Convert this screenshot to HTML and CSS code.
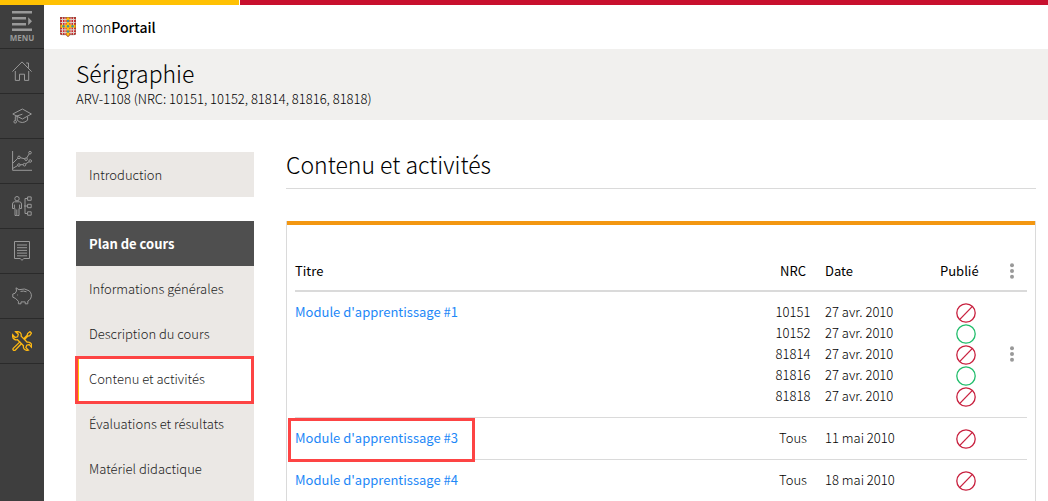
FILE: index.html
```html
<!DOCTYPE html>
<html lang="fr">
<head>
  <meta charset="UTF-8">
  <title>monPortail - Sérigraphie</title>
  <meta name="viewport" content="width=device-width, initial-scale=1">
  <link rel="stylesheet" href="styles.css">
</head>
<body>

  <!-- Symboles partagés -->
  <svg class="symbols" aria-hidden="true">
    <symbol id="off" viewBox="0 0 20 20">
      <circle cx="10" cy="10" r="9.2"/>
      <path d="M3.6 16.6L16.4 3.4"/>
    </symbol>
    <symbol id="on" viewBox="0 0 20 20">
      <circle cx="10" cy="10" r="9.2"/>
    </symbol>
    <symbol id="dots" viewBox="0 0 4 16">
      <circle cx="2" cy="2.2" r="2"/>
      <circle cx="2" cy="8" r="2"/>
      <circle cx="2" cy="13.8" r="2"/>
    </symbol>
  </svg>

  <div class="topbar"></div>

  <div class="layout">

    <!-- BARRE LATÉRALE -->
    <nav class="sidebar">
      <button class="sidebar__item sidebar__menu" type="button">
        <svg class="icon-menu" viewBox="0 0 20 20" aria-hidden="true">
          <path d="M0 0h20v2.6H0zM0 6h14v2.6H0zM0 12h14v2.6H0zM0 17.4h20V20H0zM16.2 6.3l3.8 4-3.8 4z"/>
        </svg>
        MENU
      </button>
      <a class="sidebar__item" href="#" aria-label="Accueil">
        <svg class="icon" viewBox="0 0 20 20">
          <path d="M.4 10.6L10 .9l9.600 9.700M14.200 2h2.300v4.800M3.300 10v9.400h4.200v-6.200h5v6.200h4.200V10"/>
        </svg>
      </a>
      <a class="sidebar__item" href="#" aria-label="Études">
        <svg class="icon" viewBox="0 0 20 20">
          <path d="M.8 8L10.400 3l9 5-9 5zM10.400 8.200L3.300 10.500v4M5.200 10.600v3.600q5 4.600 10.400 0v-3.600"/>
          <circle cx="3.200" cy="15.800" r="1.300"/>
        </svg>
      </a>
      <a class="sidebar__item" href="#" aria-label="Résultats">
        <svg class="icon" viewBox="0 0 20 20">
          <path d="M.6 0v19.300H20M.8 12.200l5-4.900M8.200 6.700l5 1.200M14.700 7l2.500-4.200M.8 17.400l4.800-2.800M8.200 13.700h3M13.500 12.900l3.600-2.200"/>
          <circle cx="7" cy="6.400" r="1.300"/>
          <circle cx="14.100" cy="8.200" r="1.300"/>
          <circle cx="18" cy="1.700" r="1.300"/>
          <circle cx="6.900" cy="14" r="1.300"/>
          <circle cx="12.500" cy="13.700" r="1.300"/>
          <circle cx="18.200" cy="10" r="1.300"/>
        </svg>
      </a>
      <a class="sidebar__item" href="#" aria-label="Organisation">
        <svg class="icon" viewBox="0 0 20 20">
          <circle cx="5" cy="2.700" r="2.200"/>
          <path d="M2.500 5.800h5q2 .2 2 2.200v4.500H7.600V8.600M2.500 5.800q-2 .2-2 2.200v4.500h1.900V8.600M3 12.500v7h1.800v-6M7 12.500v7H5.200M12 10h3.500M15.500 2.500H13v15h2.500"/>
          <path d="M15.600.9h3.600v3.400h-3.600zM15.600 8.300h3.600v3.400h-3.600zM15.600 15.800h3.600v3.400h-3.600z"/>
        </svg>
      </a>
      <a class="sidebar__item" href="#" aria-label="Documents">
        <svg class="icon" viewBox="0 0 20 20">
          <path d="M2.500.5h15v17h-5.800L10 19.400l-1.700-1.900H2.500zM5 4h10M5 6.700h10M5 9.400h10M5 12.100h10M5 14.800h10"/>
        </svg>
      </a>
      <a class="sidebar__item" href="#" aria-label="Finances">
        <svg class="icon" viewBox="0 0 20 20">
          <path d="M4 1.800l3 1.900q6-2 10.300 1.200 3.600 3.700 1.100 8.100-1 1.300-2.600 2.100v2.700h-2.600v-1.900H9v1.900H6.400v-2.500L3.700 12.500.8 11.200V8l2.300-.7 1.400-2.300zM8.500 5.400q3.200-.8 6 .4M5.600 8.600v.8"/>
        </svg>
      </a>
      <a class="sidebar__item sidebar__item--active" href="#" aria-label="Outils">
        <svg class="icon" viewBox="0 0 20 20">
          <path d="M3.600.7l2.700 2.500-.7 2.600L3 6.500.7 3.800Q.2 7 2.500 8.400q1.300.8 3 .3l6 6q-.5 2.100.9 3.600 1.600 1.500 4 .9l-2.500-2.600.8-2.400 2.500-.7 2.300 2.600q.8-2.600-1-4.100-1.500-1.200-3.300-.8L9.100 5.100q.6-2-.9-3.500Q6.300.1 3.600.7z"/>
          <path d="M11.700 7.700l3.500-3.500.4-1.700 2.400-1.900 1.500 1.500-1.800 2.500-1.800.4-3.400 3.500M8.200 10.600l-7 6.700q-.7 1.200.3 2 1 .6 1.900-.3l6.400-6.700"/>
        </svg>
      </a>
    </nav>

    <div class="page">

      <header class="brand">
        <svg class="crest" viewBox="0 0 16 20" aria-hidden="true">
          <path fill="#d3262c" d="M0 0h16v16.500q0 1.500-2 1.500h-4l-2 2-2-2H2q-2 0-2-1.500z"/>
          <path stroke="#ddd0c8" stroke-width="1" fill="none" d="M2.500 0v18M5 0v18M11 0v18M13.500 0v18M0 2.500h16M0 5.500h16M0 12.800h16M0 15.500h16"/>
          <path fill="#fdc00b" d="M6.500 0h3v7.800H16v3H9.500V18L8 19.500 6.500 18v-7.200H0v-3h6.500z"/>
          <g fill="#3a8fa3">
            <circle cx="8" cy="4" r="1.200"/>
            <circle cx="3.500" cy="9.300" r="1.200"/>
            <circle cx="8" cy="9.300" r="1.200"/>
            <circle cx="12.500" cy="9.300" r="1.200"/>
            <circle cx="8" cy="14.500" r="1.200"/>
          </g>
          <path fill="none" stroke="#7c5945" stroke-width=".6" d="M.3.300h15.400v16.200q0 1.200-1.800 1.200h-4L8 19.600l-1.900-1.900h-4q-1.800 0-1.800-1.200z"/>
        </svg>
        <span>mon<strong>Portail</strong></span>
      </header>

      <div class="course">
        <h1 class="course__title">Sérigraphie</h1>
        <p class="course__code">ARV-1108 (NRC: 10151, 10152, 81814, 81816, 81818)</p>
      </div>

      <div class="content">

        <!-- MENU DU COURS -->
        <nav class="menu">
          <ul class="menu__group">
            <li><a class="menu__link" href="#">Introduction</a></li>
          </ul>
          <ul class="menu__group">
            <li class="menu__heading">Plan de cours</li>
            <li><a class="menu__link" href="#">Informations générales</a></li>
            <li><a class="menu__link" href="#">Description du cours</a></li>
            <li><a class="menu__link menu__link--active" href="#">Contenu et activités</a></li>
            <li><a class="menu__link" href="#">Évaluations et résultats</a></li>
            <li><a class="menu__link" href="#">Matériel didactique</a></li>
          </ul>
        </nav>

        <!-- LISTE DES MODULES -->
        <main class="main">
          <h2 class="main__title">Contenu et activités</h2>
          <div class="panel">
            <table class="modules">
              <thead>
                <tr>
                  <th class="col-title">Titre</th>
                  <th class="col-nrc">NRC</th>
                  <th class="col-date">Date</th>
                  <th class="col-state">Publié</th>
                  <th class="col-more"><button class="more" type="button" aria-label="Options"><svg><use href="#dots"/></svg></button></th>
                </tr>
              </thead>
              <tbody>
                <tr>
                  <td><a class="modules__link" href="#">Module d'apprentissage #1</a></td>
                  <td class="col-nrc">10151<br>10152<br>81814<br>81816<br>81818</td>
                  <td class="col-date">27 avr. 2010<br>27 avr. 2010<br>27 avr. 2010<br>27 avr. 2010<br>27 avr. 2010</td>
                  <td class="col-state">
                    <svg class="state state--off"><use href="#off"/></svg>
                    <svg class="state state--on"><use href="#on"/></svg>
                    <svg class="state state--off"><use href="#off"/></svg>
                    <svg class="state state--on"><use href="#on"/></svg>
                    <svg class="state state--off"><use href="#off"/></svg>
                  </td>
                  <td class="col-more"><button class="more" type="button" aria-label="Options"><svg><use href="#dots"/></svg></button></td>
                </tr>
                <tr>
                  <td><a class="modules__link modules__link--marked" href="#">Module d'apprentissage #3</a></td>
                  <td class="col-nrc">Tous</td>
                  <td class="col-date">11 mai 2010</td>
                  <td class="col-state"><svg class="state state--off"><use href="#off"/></svg></td>
                  <td></td>
                </tr>
                <tr>
                  <td><a class="modules__link" href="#">Module d'apprentissage #4</a></td>
                  <td class="col-nrc">Tous</td>
                  <td class="col-date">18 mai 2010</td>
                  <td class="col-state"><svg class="state state--off"><use href="#off"/></svg></td>
                  <td></td>
                </tr>
              </tbody>
            </table>
          </div>
        </main>

      </div>
    </div>
  </div>

</body>
</html>
```
FILE: styles.css
```css
* {
  box-sizing: border-box;
}

body {
  margin: 0;
  min-height: 100vh;
  display: flex;
  flex-direction: column;
  font-family: "Source Sans Pro", "Noto Sans CJK SC", sans-serif;
  font-size: 14px;
  font-weight: 300;
  line-height: 21px;
  color: #000;
  background: #fff;
}

h1, h2, p, ul {
  margin: 0;
  padding: 0;
  font-weight: 300;
}

a {
  text-decoration: none;
}

.symbols {
  position: absolute;
  width: 0;
  height: 0;
}

.topbar {
  flex: none;
  height: 5px;
  background: linear-gradient(to right, #ffc103 239px, #fff 239px, #fff 240px, #c8102e 240px);
}

.layout {
  flex: 1;
  display: flex;
}

/* === BARRE LATÉRALE === */
.sidebar {
  flex: none;
  width: 44px;
  background: #3e3e3e;
}

.sidebar__item {
  display: flex;
  flex-direction: column;
  align-items: center;
  justify-content: center;
  width: 100%;
  height: 45px;
  border: 0;
  border-bottom: 1px solid #2a2a2a;
  color: #999;
}

.sidebar__menu {
  height: 44px;
  padding: 0;
  background: none;
  font-family: "Open Sans", sans-serif;
  font-size: 8px;
  font-weight: 700;
  line-height: 10px;
  gap: 2px;
}

.sidebar__item--active {
  color: #fdb813;
}

.icon {
  width: 20px;
  height: 20px;
  fill: none;
  stroke: currentColor;
  stroke-width: 1;
}

.sidebar__item--active .icon {
  stroke-width: 1.3;
}

.icon-menu {
  width: 20px;
  height: 20px;
  fill: currentColor;
}

/* === ENTÊTE === */
.page {
  flex: 1;
  min-width: 0;
  display: flex;
  flex-direction: column;
}

.brand {
  display: flex;
  align-items: center;
  gap: 6px;
  height: 44px;
  padding-left: 16px;
}

.brand strong {
  font-weight: 500;
}

.crest {
  width: 16px;
  height: 20px;
}

.course {
  padding: 9px 32px 11px;
  background: #f1f0ee;
}

.course__title {
  font-size: 23px;
  line-height: 30px;
}

.course__code {
  font-size: 13px;
}

/* === MENU DU COURS === */
.content {
  flex: 1;
  display: flex;
  gap: 32px;
  padding: 32px 12px 0 32px;
}

.menu {
  flex: none;
  display: flex;
  flex-direction: column;
  gap: 24px;
  width: 178px;
}

.menu__group {
  list-style: none;
  background: #ebe8e5;
}

.menu__group:last-child {
  flex: 1;
}

.menu__heading,
.menu__link {
  display: block;
  height: 45px;
  padding: 12px 13px;
  font-size: 13px;
  color: #222;
}

.menu__heading {
  font-weight: 700;
  color: #fff;
  background: #4f4f4f;
}

.menu__link--active {
  position: relative;
  padding-left: 10px;
  border-left: 3px solid #ffc103;
  background: #fff;
}

.menu__link--active::after {
  content: "";
  position: absolute;
  top: 0;
  right: 0;
  bottom: -3px;
  left: -4px;
  border: 3px solid #fd4444;
}

/* === LISTE DES MODULES === */
.main {
  flex: 1;
  min-width: 0;
  display: flex;
  flex-direction: column;
}

.main__title {
  padding-bottom: 11px;
  border-bottom: 1px solid #dadada;
  font-size: 23px;
  line-height: 25px;
}

.panel {
  flex: 1;
  margin-top: 32px;
  padding: 30px 8px 0;
  border: solid #dadada;
  border-width: 0 1px;
  box-shadow: inset 0 4px #f39711;
}

.modules {
  width: 100%;
  table-layout: fixed;
  border-collapse: separate;
  border-spacing: 0;
  font-size: 13px;
}

.modules th {
  padding: 9px 0;
  border-bottom: 2px solid #dadada;
  font-weight: 400;
  text-align: left;
}

.modules td {
  padding: 9px 0 11px;
  border-bottom: 1px solid #dadada;
  vertical-align: top;
}

.modules tbody tr:last-child td {
  border-bottom: 0;
}

.modules .col-nrc {
  width: 52px;
  text-align: center;
}

.modules .col-date {
  width: 115px;
  padding-left: 6px;
}

.modules .col-state {
  width: 63px;
  padding-left: 6px;
}

.modules td.col-state {
  padding-top: 10px;
  padding-bottom: 0;
}

.modules .col-more {
  width: 30px;
  text-align: center;
  vertical-align: middle;
}

.modules__link {
  position: relative;
  font-weight: 400;
  color: #1e88f7;
}

.modules__link--marked::after {
  content: "";
  position: absolute;
  top: -10px;
  right: -17px;
  bottom: -15px;
  left: -7px;
  border: 3px solid #fd4444;
}

.state {
  display: block;
  width: 20px;
  height: 20px;
  margin: 1px 0 0 16px;
  fill: none;
  stroke-width: 1.3;
}

.state--off {
  stroke: #c8203e;
}

.state--on {
  stroke: #21bd6b;
}

.more {
  display: block;
  margin: 0 auto;
  padding: 0;
  border: 0;
  background: none;
}

.more svg {
  display: block;
  width: 4px;
  height: 16px;
  fill: #999;
}
```
